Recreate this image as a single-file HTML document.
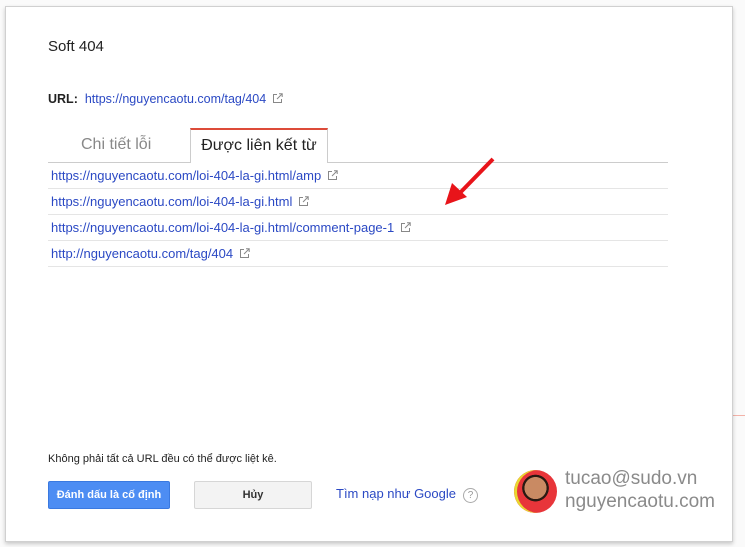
<!DOCTYPE html>
<html><head><meta charset="utf-8"><style>
body{margin:0;width:745px;height:547px;background:#f1f1f1;position:relative;overflow:hidden;font-family:"Liberation Sans",Arial,sans-serif}
.bg{position:absolute;left:0;top:0;width:745px;height:547px;background:#fafafa}
.dlg{position:absolute;left:5px;top:6px;width:726px;height:534px;background:#fff;border:1px solid #d0d0d0;box-shadow:0 2px 4px rgba(0,0,0,.2)}
.a{position:absolute;white-space:nowrap}
.lk{color:#2b49c4;text-decoration:none}
.ext{display:inline-block;width:11px;height:11px;margin-left:6px;vertical-align:-1px}
.row{position:absolute;left:48px;width:620px;height:25px;border-bottom:1px solid #e5e5e5;font-size:13px;line-height:25px}
.row .lk{margin-left:3px}
</style></head><body>
<div class="bg"></div>
<div style="position:absolute;right:0;top:415px;width:14px;height:1px;background:#f3b2a8"></div>
<div class="dlg"></div>
<svg width="0" height="0" style="position:absolute"><defs><g id="e"><path d="M5 1.5H1.5V9.5H9.5V6" fill="none" stroke="#888" stroke-width="1"/><path d="M5 6L10 1M7 0.8H10.2V4" fill="none" stroke="#888" stroke-width="1"/></g></defs></svg>
<div class="a" style="left:48px;top:38px;font-size:15px;color:#222">Soft 404</div>
<div class="a" style="left:48px;top:92px;font-size:12.5px;color:#222"><b>URL:</b> <span class="lk">&nbsp;https://nguyencaotu.com/tag/404</span><svg class="ext" viewBox="0 0 11 11"><use href="#e"/></svg></div>
<div class="a" style="left:48px;top:162px;width:620px;height:1px;background:#ccc"></div>
<div class="a" style="left:81px;top:136px;font-size:16px;color:#888">Chi tiết lỗi</div>
<div class="a" style="left:190px;top:128px;width:138px;border-top:2px solid #dd4b39;border-left:1px solid #ccc;border-right:1px solid #ccc;background:#fff;box-sizing:border-box;font-size:16px;color:#222;text-align:center;line-height:32px;height:35px">Được liên kết từ</div>
<div class="row" style="top:163px"><span class="lk">https://nguyencaotu.com/loi-404-la-gi.html/amp</span><svg class="ext" viewBox="0 0 11 11"><use href="#e"/></svg></div>
<div class="row" style="top:189px"><span class="lk">https://nguyencaotu.com/loi-404-la-gi.html</span><svg class="ext" viewBox="0 0 11 11"><use href="#e"/></svg></div>
<div class="row" style="top:215px"><span class="lk">https://nguyencaotu.com/loi-404-la-gi.html/comment-page-1</span><svg class="ext" viewBox="0 0 11 11"><use href="#e"/></svg></div>
<div class="row" style="top:241px"><span class="lk">http://nguyencaotu.com/tag/404</span><svg class="ext" viewBox="0 0 11 11"><use href="#e"/></svg></div>
<svg class="a" style="left:440px;top:150px" width="60" height="60"><line x1="53" y1="9" x2="14" y2="49" stroke="#e8141a" stroke-width="4"/><polygon points="5,55 12,33 27,47" fill="#e8141a"/></svg>
<div class="a" style="left:48px;top:453px;font-size:11px;color:#222">Không phải tất cả URL đều có thể được liệt kê.</div>
<div class="a" style="left:48px;top:481px;width:122px;height:28px;background:#4d8df3;border:1px solid #3a79e0;box-sizing:border-box;border-radius:2px;color:#fff;font-size:11px;font-weight:bold;text-align:center;line-height:26px">Đánh dấu là cố định</div>
<div class="a" style="left:194px;top:481px;width:118px;height:28px;background:#f3f3f3;border:1px solid #d6d6d6;box-sizing:border-box;border-radius:2px;color:#333;font-size:11px;font-weight:bold;text-align:center;line-height:26px">Hủy</div>
<div class="a lk" style="left:336px;top:486px;font-size:13px">Tìm nạp như Google</div>
<div class="a" style="left:463px;top:488px;width:13px;height:13px;border:1px solid #aaa;border-radius:50%;font-size:10px;color:#999;text-align:center;line-height:13px">?</div>
<div class="a" style="left:514px;top:470px;width:43px;height:43px;border-radius:50%;background:radial-gradient(circle at 50% 42%,#c98a63 0 33%,#2a1a12 34% 40%,#e8353a 41%),#e33;overflow:hidden"><div style="position:absolute;left:0;top:0;width:43px;height:43px;border-radius:50%;box-shadow:inset 3px 0 0 #e8d830"></div></div>
<div class="a" style="left:565px;top:468px;font-size:19px;color:#8a8a8a">tucao@sudo.vn</div>
<div class="a" style="left:565px;top:491px;font-size:19px;color:#8a8a8a">nguyencaotu.com</div>
</body></html>
